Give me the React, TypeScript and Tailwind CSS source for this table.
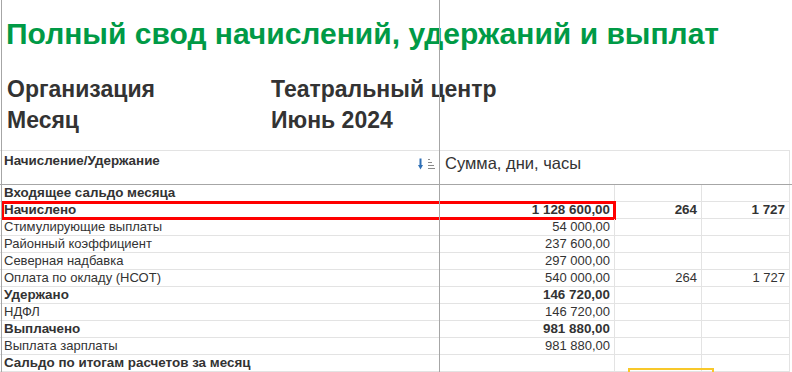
import React from "react";

type Row = {
  name: string;
  bold?: boolean;
  sum?: string;
  days?: string;
  hours?: string;
  marked?: boolean;
};

const rows: Row[] = [
  { name: "Входящее сальдо месяца", bold: true },
  { name: "Начислено", bold: true, sum: "1 128 600,00", days: "264", hours: "1 727", marked: true },
  { name: "Стимулирующие выплаты", sum: "54 000,00" },
  { name: "Районный коэффициент", sum: "237 600,00" },
  { name: "Северная надбавка", sum: "297 000,00" },
  { name: "Оплата по окладу (НСОТ)", sum: "540 000,00", days: "264", hours: "1 727" },
  { name: "Удержано", bold: true, sum: "146 720,00" },
  { name: "НДФЛ", sum: "146 720,00" },
  { name: "Выплачено", bold: true, sum: "981 880,00" },
  { name: "Выплата зарплаты", sum: "981 880,00" },
  { name: "Сальдо по итогам расчетов за месяц", bold: true },
];

const SortIcon = () => (
  <svg width="18" height="13" viewBox="0 0 18 13">
    <path d="M2.5 0.5 V8" stroke="#2f6fb5" strokeWidth="2" />
    <path d="M0 7 L2.5 11.5 L5 7 Z" fill="#2f6fb5" />
    <path d="M10 1.5 H12 M10 4.5 H14 M10 7.5 H16 M10 10.5 H17" stroke="#8a8a8a" strokeWidth="1" />
  </svg>
);

const App: React.FC = () => {
  return (
    <div className="relative w-[792px] h-[372px] overflow-hidden bg-white text-[#333] font-['Liberation_Sans',Arial,sans-serif]">
      {/* шапка отчета */}
      <div className="pt-[17px] pl-[6px] text-[30px] leading-[34px] font-bold text-[#009a46] whitespace-nowrap">
        Полный свод начислений, удержаний и выплат
      </div>
      <div className="mt-[23px] pl-[7px] text-[23px] leading-[31px] font-bold whitespace-nowrap">
        <div className="flex">
          <div className="w-[264px]">Организация</div>
          <div>Театральный центр</div>
        </div>
        <div className="flex">
          <div className="w-[264px]">Месяц</div>
          <div>Июнь 2024</div>
        </div>
      </div>

      {/* заголовок таблицы */}
      <div className="mt-[14px] border-b border-[#a6a6a6]">
        <div className="flex w-[790px] h-[34px] border-t border-[#e3e3e3]">
          <div className="w-[440px] flex justify-between pl-[4px] pr-[4px] pt-[2px]">
            <span className="text-[13.4px] font-bold leading-[16px]">Начисление/Удержание</span>
            <span className="pt-[5px]">
              <SortIcon />
            </span>
          </div>
          <div className="w-[350px] border-r border-[#e3e3e3] pl-[5px] pt-[2px] text-[16.5px] leading-[20px]">
            Сумма, дни, часы
          </div>
        </div>
      </div>

      {/* строки */}
      <div className="text-[13px] leading-[16px]">
        {rows.map((r) => (
          <div
            key={r.name}
            className={`relative flex w-[790px] h-[17px] border-b border-[#e3e3e3] ${r.bold ? "font-bold text-[13.4px]" : ""}`}
          >
            <div className="w-[440px] pl-[4px] whitespace-nowrap">{r.name}</div>
            <div className="w-[175px] border-r border-[#e3e3e3] pr-[4px] text-right">{r.sum}</div>
            <div className="w-[87px] border-r border-[#e3e3e3] pr-[4px] text-right">{r.days}</div>
            <div className="w-[88px] border-r border-[#e3e3e3] pr-[4px] text-right">{r.hours}</div>
            {r.marked && (
              <div className="absolute left-[1px] top-[-1px] w-[615px] h-[19px] border-[3px] border-[#ff0000]" />
            )}
          </div>
        ))}
      </div>

      {/* линии сетки поверх */}
      <div className="absolute left-[1px] top-0 bottom-0 w-px bg-[#a6a6a6]" />
      <div className="absolute left-[439px] top-0 bottom-0 w-px bg-[#a6a6a6]" />
      <div className="absolute left-[628px] top-[368px] w-[86px] h-[20px] border-2 border-[#f8c82a]" />
    </div>
  );
};

export default App;
